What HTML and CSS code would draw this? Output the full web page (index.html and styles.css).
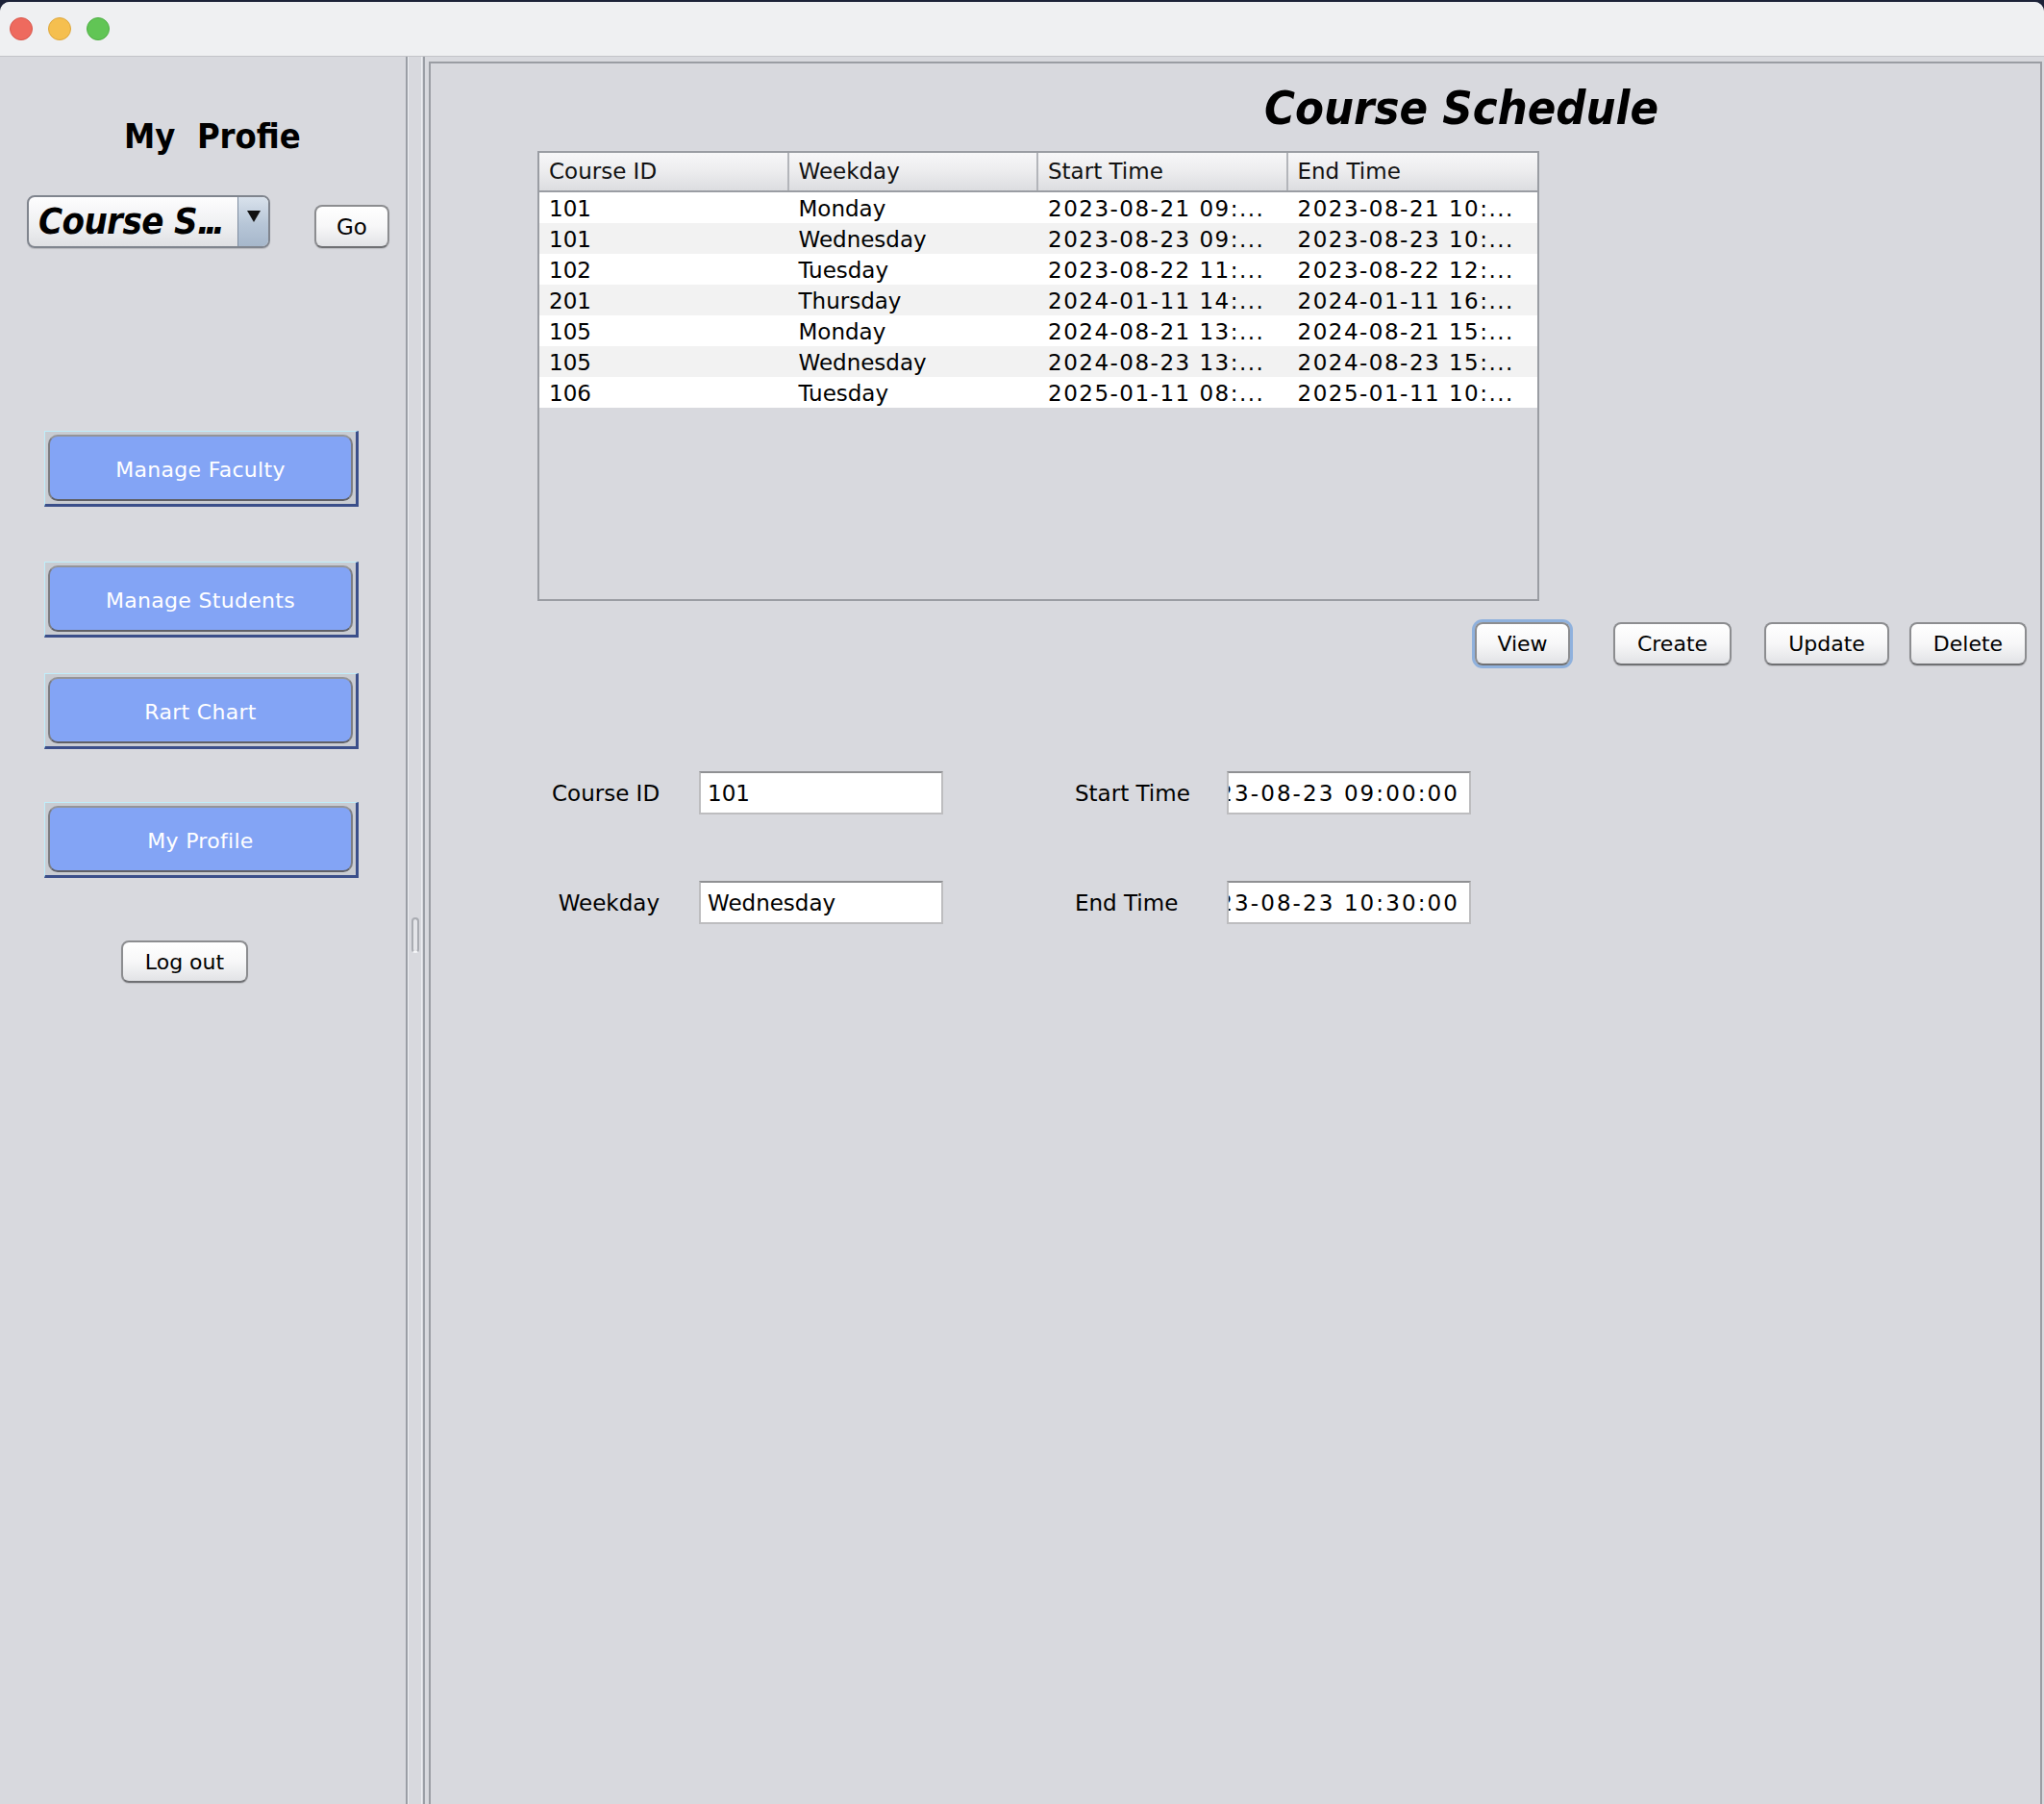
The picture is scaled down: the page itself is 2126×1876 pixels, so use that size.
FILE: index.html
```html
<!DOCTYPE html>
<html lang="en">
<head>
<meta charset="utf-8">
<title>Course Schedule</title>
<link rel="stylesheet" href="styles.css">
</head>
<body>
<div class="window">
  <header class="titlebar">
    <span class="light light-red"></span>
    <span class="light light-yellow"></span>
    <span class="light light-green"></span>
  </header>
  <div class="content">
    <aside class="sidebar">
      <h2 class="profile-title">My&nbsp; Profie</h2>
      <div class="nav-row">
        <div class="combo">
          <span class="combo-text">Course S<span class="combo-ellipsis">...</span></span>
          <span class="combo-arrow"><span class="combo-triangle"></span></span>
        </div>
        <button class="btn btn-go">Go</button>
      </div>
      <button class="nav-btn nav-faculty"><span class="nav-btn-inner">Manage Faculty</span></button>
      <button class="nav-btn nav-students"><span class="nav-btn-inner">Manage Students</span></button>
      <button class="nav-btn nav-chart"><span class="nav-btn-inner">Rart Chart</span></button>
      <button class="nav-btn nav-profile"><span class="nav-btn-inner">My Profile</span></button>
      <button class="btn btn-logout">Log out</button>
    </aside>
    <div class="splitter"><span class="grip"></span></div>
    <main class="panel">
      <h1 class="panel-title">Course Schedule</h1>
      <div class="table">
        <div class="thead">
          <div class="th">Course ID</div>
          <div class="th">Weekday</div>
          <div class="th">Start Time</div>
          <div class="th">End Time</div>
        </div>
        <div class="tr">
          <div class="td">101</div><div class="td">Monday</div><div class="td td-date">2023-08-21 09:...</div><div class="td td-date">2023-08-21 10:...</div>
        </div>
        <div class="tr tr-alt">
          <div class="td">101</div><div class="td">Wednesday</div><div class="td td-date">2023-08-23 09:...</div><div class="td td-date">2023-08-23 10:...</div>
        </div>
        <div class="tr">
          <div class="td">102</div><div class="td">Tuesday</div><div class="td td-date">2023-08-22 11:...</div><div class="td td-date">2023-08-22 12:...</div>
        </div>
        <div class="tr tr-alt">
          <div class="td">201</div><div class="td">Thursday</div><div class="td td-date">2024-01-11 14:...</div><div class="td td-date">2024-01-11 16:...</div>
        </div>
        <div class="tr">
          <div class="td">105</div><div class="td">Monday</div><div class="td td-date">2024-08-21 13:...</div><div class="td td-date">2024-08-21 15:...</div>
        </div>
        <div class="tr tr-alt">
          <div class="td">105</div><div class="td">Wednesday</div><div class="td td-date">2024-08-23 13:...</div><div class="td td-date">2024-08-23 15:...</div>
        </div>
        <div class="tr">
          <div class="td">106</div><div class="td">Tuesday</div><div class="td td-date">2025-01-11 08:...</div><div class="td td-date">2025-01-11 10:...</div>
        </div>
      </div>
      <div class="actions">
        <button class="btn btn-action btn-view">View</button>
        <button class="btn btn-action btn-create">Create</button>
        <button class="btn btn-action btn-update">Update</button>
        <button class="btn btn-action btn-delete">Delete</button>
      </div>
      <div class="form">
        <label class="form-label form-label-right">Course ID</label>
        <div class="field"><span class="field-text">101</span></div>
        <label class="form-label form-label-left">Start Time</label>
        <div class="field field-scrolled"><span class="field-text field-date">2023-08-23 09:00:00</span></div>
        <label class="form-label form-label-right">Weekday</label>
        <div class="field"><span class="field-text">Wednesday</span></div>
        <label class="form-label form-label-left">End Time</label>
        <div class="field field-scrolled"><span class="field-text field-date">2023-08-23 10:30:00</span></div>
      </div>
    </main>
  </div>
</div>
</body>
</html>
```
FILE: styles.css
```css
html {
  background: #1c2238;
}
body {
  margin: 0;
  font-family: "DejaVu Sans", "Liberation Sans", sans-serif;
  color: #000;
}
.window {
  margin-top: 2px;
  height: 1874px;
  display: flex;
  flex-direction: column;
  background: #d8d9de;
  border-radius: 10px 10px 0 0;
  overflow: hidden;
}

/* title bar */
.titlebar {
  height: 56px;
  flex: none;
  background: #eff0f2;
  border-bottom: 1px solid #c3c4c8;
  display: flex;
  align-items: center;
  gap: 16px;
  padding-left: 10px;
}
.light {
  width: 24px;
  height: 24px;
  border-radius: 50%;
  box-sizing: border-box;
}
.light-red { background: #ee6a5e; border: 1px solid #d9574c; }
.light-yellow { background: #f5bf4f; border: 1px solid #dea73c; }
.light-green { background: #61c555; border: 1px solid #4eaf43; }

.content {
  flex: 1;
  display: flex;
  min-height: 0;
}

/* sidebar */
.sidebar {
  width: 424px;
  flex: none;
  box-sizing: border-box;
  border-right: 2px solid #9a9ea5;
  display: flex;
  flex-direction: column;
  align-items: flex-start;
}
.profile-title {
  margin: 63px 0 0 129px;
  font-size: 36px;
  line-height: 40px;
  font-weight: bold;
  font-stretch: condensed;
  white-space: nowrap;
}
.nav-row {
  margin: 41px 0 0 28px;
  display: flex;
  align-items: flex-end;
}
.combo {
  width: 253px;
  height: 55px;
  box-sizing: border-box;
  border: 2px solid #80858e;
  border-radius: 8px;
  display: flex;
  overflow: hidden;
  background: linear-gradient(#fdfdfe, #eeeff1 60%, #dfe0e3);
  box-shadow: 0 1px 1px rgba(0,0,0,0.15);
}
.combo-text {
  flex: 1;
  padding-left: 10px;
  font-size: 38px;
  line-height: 51px;
  font-weight: bold;
  font-style: italic;
  font-stretch: condensed;
  letter-spacing: -0.6px;
  white-space: nowrap;
  overflow: hidden;
}
.combo-ellipsis {
  letter-spacing: -5px;
}
.combo-arrow {
  width: 32px;
  flex: none;
  border-left: 1px solid #7f8da0;
  background: linear-gradient(#d9e2ec, #b7c6d7 55%, #a6b7cb);
  display: flex;
  justify-content: center;
  padding-top: 14px;
  box-sizing: border-box;
}
.combo-triangle {
  width: 0;
  height: 0;
  border-left: 7px solid transparent;
  border-right: 7px solid transparent;
  border-top: 12px solid #111;
}

.btn {
  font-family: "DejaVu Sans", "Liberation Sans", sans-serif;
  font-size: 22px;
  color: #000;
  box-sizing: border-box;
  border: 2px solid #8c8d90;
  border-bottom-color: #6f7073;
  border-radius: 8px;
  background: linear-gradient(#ffffff, #f7f7f8 50%, #e2e3e6);
  padding: 0;
  box-shadow: 0 1px 1px rgba(0,0,0,0.12);
}
.btn-go {
  margin-left: 46px;
  width: 78px;
  height: 45px;
  font-size: 23px;
}

.nav-btn {
  margin-left: 46px;
  width: 327px;
  height: 79px;
  box-sizing: border-box;
  padding: 3px;
  background: #c9ccd2;
  border-style: solid;
  border-width: 1px 3px 3px 1px;
  border-color: #c0eefa #3b4f8a #3b4f8a #c0eefa;
  display: flex;
  font-family: "DejaVu Sans", "Liberation Sans", sans-serif;
}
.nav-btn-inner {
  flex: 1;
  display: flex;
  align-items: center;
  justify-content: center;
  padding-top: 4px;
  background: #83a4f5;
  border: 2px solid #7c7d82;
  border-top-color: #939498;
  border-bottom-color: #5f6066;
  border-radius: 10px;
  color: #fff;
  font-size: 22px;
  letter-spacing: 0.3px;
}
.nav-faculty { margin-top: 190px; }
.nav-students { margin-top: 57px; }
.nav-chart { margin-top: 37px; }
.nav-profile { margin-top: 55px; }
.btn-logout {
  margin: 65px 0 0 126px;
  width: 132px;
  height: 44px;
}

/* splitter */
.splitter {
  width: 22px;
  flex: none;
  display: flex;
  align-items: center;
  background: linear-gradient(to right,
    #eceef2 0 1px, transparent 1px 14px,
    #eceef2 14px 15px, transparent 15px 16px,
    #9a9ea5 16px 18px, transparent 18px);
}
.grip {
  margin-left: 4px;
  margin-top: 10px;
  width: 8px;
  height: 37px;
  box-sizing: border-box;
  border: 2px solid #a9acb2;
  border-bottom-color: #f4f5f7;
  border-radius: 4px;
  background: #e4e5e9;
}

/* main panel */
.panel {
  flex: 1;
  margin: 5px 2px 0 0;
  border: 2px solid #9a9da3;
  border-bottom: none;
  display: flex;
  flex-direction: column;
  align-items: flex-start;
}
.panel-title {
  margin: 18px 0 0 867px;
  font-size: 48.5px;
  line-height: 56px;
  font-weight: bold;
  font-style: italic;
  font-stretch: condensed;
  white-space: nowrap;
}

.table {
  margin: 17px 0 0 111px;
  width: 1042px;
  height: 468px;
  box-sizing: border-box;
  border: 2px solid #9a9da3;
  font-size: 23px;
}
.thead, .tr {
  display: grid;
  grid-template-columns: repeat(4, 1fr);
}
.thead {
  height: 41px;
  box-sizing: border-box;
  border-bottom: 2px solid #9a9da3;
  background: linear-gradient(#f7f7f8, #ececee 50%, #dcdde0);
}
.th {
  padding-left: 10px;
  line-height: 39px;
  border-right: 2px solid #b3b5ba;
  color: #111;
}
.th:last-child {
  border-right: none;
}
.tr {
  height: 32px;
  overflow: hidden;
  background: #fff;
}
.tr-alt {
  background: #f2f2f2;
}
.td {
  padding-left: 10px;
  line-height: 34px;
  white-space: nowrap;
  overflow: hidden;
}
.td-date {
  letter-spacing: 1.5px;
}

.actions {
  margin: 22px 0 0 1086px;
  display: flex;
}
.btn-action {
  height: 45px;
}
.btn-view {
  width: 99px;
  box-shadow: 0 0 0 3px #8fb1dd;
}
.btn-create { width: 123px; margin-left: 45px; }
.btn-update { width: 130px; margin-left: 34px; }
.btn-delete { width: 122px; margin-left: 21px; }

.form {
  margin: 110px 0 0 126px;
  display: grid;
  grid-template-columns: 126px 254px 241px 254px;
  grid-auto-rows: 45px;
  column-gap: 27px;
  row-gap: 69px;
  font-size: 23px;
}
.form-label {
  align-self: center;
  white-space: nowrap;
}
.form-label-right {
  text-align: right;
  padding-right: 14px;
}
.form-label-left {
  padding-left: 110px;
}
.field {
  box-sizing: border-box;
  border: 2px solid #bdbdbf;
  border-top-color: #8f9093;
  background: #fff;
  display: flex;
  align-items: center;
  padding: 0 7px;
  overflow: hidden;
  white-space: nowrap;
}
.field-scrolled {
  justify-content: flex-end;
  padding-right: 10px;
}
.field-text {
  flex: none;
}
.field-date {
  letter-spacing: 2.1px;
}
```
